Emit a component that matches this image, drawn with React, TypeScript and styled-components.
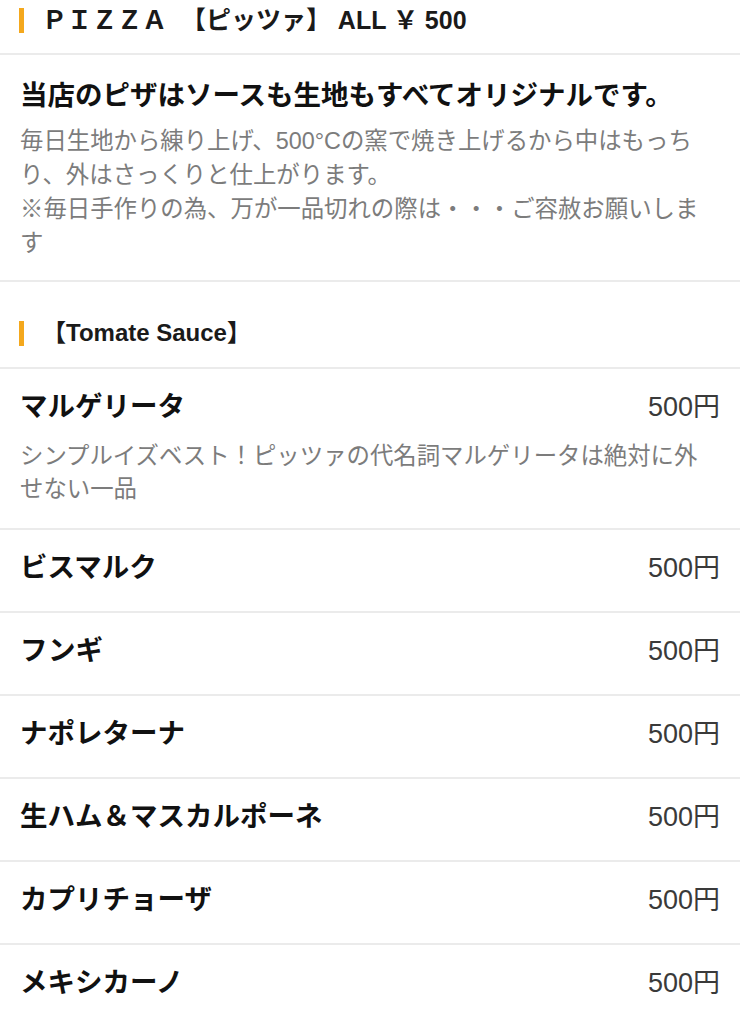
import React from "react";
import styled, { createGlobalStyle } from "styled-components";

const GlobalStyle = createGlobalStyle`
  body {
    margin: 0;
    background: #fff;
    font-family: "Liberation Sans", "Noto Sans CJK JP", sans-serif;
    color: #111;
  }
`;

const Page = styled.div`
  width: 740px;
  overflow: hidden;
`;

const Heading = styled.h2<{ $padTop: number; $padBottom: number; $size: number }>`
  display: flex;
  align-items: center;
  margin: 0;
  padding: ${(p) => p.$padTop}px 20px ${(p) => p.$padBottom}px 19px;
  font-size: ${(p) => p.$size}px;
  line-height: 34px;
  font-weight: 700;
  color: #1a1a1a;
  border-bottom: 2px solid #ebebeb;
  white-space: pre;

  &::before {
    content: "";
    flex: none;
    width: 5px;
    height: 25px;
    margin-right: 18px;
    background: #f4a81d;
  }
`;

const Intro = styled.div`
  padding: 23px 20px 20px;
  border-bottom: 2px solid #ebebeb;
`;

const Lead = styled.p`
  margin: 0;
  font-size: 27.5px;
  line-height: 36px;
  font-weight: 700;
  color: #111;
`;

const Note = styled.p`
  margin: 10px 0 0;
  font-size: 23.4px;
  line-height: 34px;
  color: #7c7c7c;
`;

const Item = styled.div<{ $hasDesc: boolean }>`
  padding: 20px 20px ${(p) => (p.$hasDesc ? 22 : 25)}px;
  border-bottom: 2px solid #ebebeb;
`;

const ItemTop = styled.div`
  display: flex;
  justify-content: space-between;
  align-items: center;
  line-height: 36px;
`;

const Name = styled.span`
  font-size: 27.5px;
  font-weight: 700;
  color: #111;
`;

const Price = styled.span`
  font-size: 27px;
  color: #3a3a3a;
`;

const Desc = styled.p`
  margin: 15px 0 0;
  font-size: 23.4px;
  line-height: 33px;
  color: #7c7c7c;
`;

interface MenuEntry {
  name: string;
  price: string;
  desc?: string;
}

const items: MenuEntry[] = [
  {
    name: "マルゲリータ",
    price: "500円",
    desc: "シンプルイズベスト！ピッツァの代名詞マルゲリータは絶対に外せない一品",
  },
  { name: "ビスマルク", price: "500円" },
  { name: "フンギ", price: "500円" },
  { name: "ナポレターナ", price: "500円" },
  { name: "生ハム＆マスカルポーネ", price: "500円" },
  { name: "カプリチョーザ", price: "500円" },
  { name: "メキシカーノ", price: "500円" },
];

const App: React.FC = () => {
  return (
    <>
      <GlobalStyle />
      <Page>
        <Heading $padTop={3} $padBottom={16} $size={25}>
          ＰＩＺＺＡ  【ピッツァ】 ALL ￥ 500
        </Heading>
        <Intro>
          <Lead>当店のピザはソースも生地もすべてオリジナルです。</Lead>
          <Note>
            毎日生地から練り上げ、500°Cの窯で焼き上げるから中はもっちり、外はさっくりと仕上がります。
            <br />
            ※毎日手作りの為、万が一品切れの際は・・・ご容赦お願いします
          </Note>
        </Intro>
        <Heading $padTop={34} $padBottom={17} $size={24}>
          【Tomate Sauce】
        </Heading>
        {items.map((item) => (
          <Item key={item.name} $hasDesc={!!item.desc}>
            <ItemTop>
              <Name>{item.name}</Name>
              <Price>{item.price}</Price>
            </ItemTop>
            {item.desc && <Desc>{item.desc}</Desc>}
          </Item>
        ))}
      </Page>
    </>
  );
};

export default App;
